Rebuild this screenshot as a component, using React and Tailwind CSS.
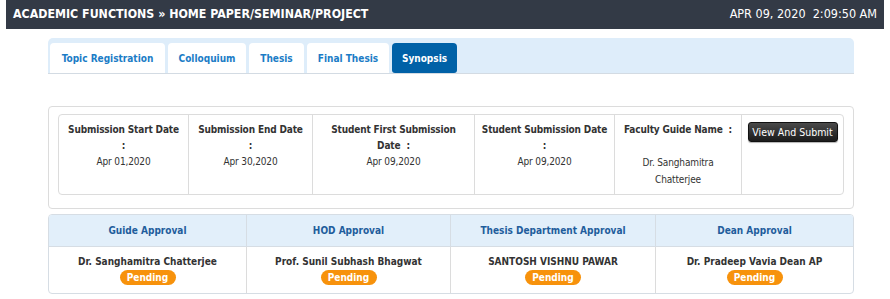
import React from 'react';

const tabs = [
    { label: 'Topic Registration', w: 'w-[115px]' },
    { label: 'Colloquium', w: 'w-[78px]' },
    { label: 'Thesis', w: 'w-[55px]' },
    { label: 'Final Thesis', w: 'w-[82px]' },
    { label: 'Synopsis', w: 'w-[65px]' },
];

const approvals = [
    { title: 'Guide Approval', name: 'Dr. Sanghamitra Chatterjee' },
    { title: 'HOD Approval', name: 'Prof. Sunil Subhash Bhagwat' },
    { title: 'Thesis Department Approval', name: 'SANTOSH VISHNU PAWAR' },
    { title: 'Dean Approval', name: 'Dr. Pradeep Vavia Dean AP' },
];

function PendingBadge() {
    return (
        <span className="inline-block w-[56px] h-[15px] leading-[15px] rounded-full bg-[#f7920c] text-white text-[10px] font-bold text-center">
            Pending
        </span>
    );
}

export default function App() {
    return (
        <div className="w-[890px] h-[299px] bg-white overflow-hidden font-['DejaVu_Sans_Condensed','DejaVu_Sans',sans-serif] text-[#333]">
            {/* top bar */}
            <div className="mx-[6px] h-[29px] bg-[#333a46] flex items-center justify-between pl-[7px] pr-[7px] text-white">
                <span className="text-[12.3px] font-bold">ACADEMIC FUNCTIONS » HOME PAPER/SEMINAR/PROJECT</span>
                <span className="text-[12.5px]">APR 09, 2020&nbsp;&nbsp;2:09:50 AM</span>
            </div>

            <div className="ml-[48px] w-[806px]">
                {/* tabs */}
                <div className="mt-[9px] h-[36px] bg-[#deedfa] rounded-t-[5px] border-b border-[#d3dbe3] flex items-end gap-[3px] pl-[2px]">
                    {tabs.map((t) => (
                        <div
                            key={t.label}
                            className={
                                t.label === 'Synopsis'
                                    ? `${t.w} h-[30px] flex items-center justify-center rounded-t-[4px] rounded-b-[3px] bg-[#0061a7] text-white text-[10px] font-bold`
                                    : `${t.w} h-[30px] flex items-center justify-center rounded-t-[4px] bg-white text-[#1b7cc6] text-[10px] font-bold`
                            }
                        >
                            {t.label}
                        </div>
                    ))}
                </div>

                {/* dates box */}
                <div className="mt-[32px] h-[103px] border border-[#dcdcdc] rounded-[4px] pt-[7px] px-[9px]">
                    <div className="h-[81px] border border-[#dcdcdc] rounded-[4px] flex text-[10px] tracking-[-0.15px] leading-[16px] text-center">
                        <div className="w-[130px] pt-[7px] border-r border-[#dcdcdc]">
                            <div className="font-bold">Submission Start Date</div>
                            <div className="font-bold">:</div>
                            <div>Apr 01,2020</div>
                        </div>
                        <div className="w-[124px] pt-[7px] border-r border-[#dcdcdc]">
                            <div className="font-bold">Submission End Date</div>
                            <div className="font-bold">:</div>
                            <div>Apr 30,2020</div>
                        </div>
                        <div className="w-[162px] pt-[7px] border-r border-[#dcdcdc]">
                            <div className="font-bold">Student First Submission</div>
                            <div className="font-bold">Date&nbsp;&nbsp;:</div>
                            <div>Apr 09,2020</div>
                        </div>
                        <div className="w-[140px] pt-[7px] border-r border-[#dcdcdc]">
                            <div className="font-bold">Student Submission Date</div>
                            <div className="font-bold">:</div>
                            <div>Apr 09,2020</div>
                        </div>
                        <div className="w-[127px] pt-[7px] border-r border-[#dcdcdc] leading-[17px]">
                            <div className="font-bold leading-[16px]">Faculty Guide Name&nbsp;&nbsp;:</div>
                            <div className="mt-[16px]">Dr. Sanghamitra</div>
                            <div>Chatterjee</div>
                        </div>
                        <div className="flex-1 pt-[7px] flex justify-center">
                            <button className="h-[20px] w-[90px] rounded-[3px] bg-gradient-to-b from-[#4a4a4a] to-[#1c1c1c] border border-[#111] text-white text-[10.5px] tracking-normal leading-[18px] shadow-[0_1px_1px_rgba(0,0,0,0.3)]">
                                View And Submit
                            </button>
                        </div>
                    </div>
                </div>

                {/* approvals */}
                <div className="mt-[5px] border border-[#d6dde4] rounded-[4px] overflow-hidden">
                    <div className="grid grid-cols-[198px_204px_205px_1fr] h-[32px] bg-[#e2effa] border-b border-[#d6dde4]">
                        {approvals.map((a, i) => (
                            <div
                                key={a.title}
                                className={`flex items-center justify-center pb-[1px] text-[10px] font-bold text-[#1f5d9c] ${i < 3 ? 'border-r border-[#d6dde4]' : ''}`}
                            >
                                {a.title}
                            </div>
                        ))}
                    </div>
                    <div className="grid grid-cols-[198px_204px_205px_1fr] h-[46px]">
                        {approvals.map((a, i) => (
                            <div
                                key={a.name}
                                className={`flex flex-col items-center pt-[7px] ${i < 3 ? 'border-r border-[#dcdcdc]' : ''}`}
                            >
                                <div className="text-[10px] font-bold leading-[16px] text-[#333]">{a.name}</div>
                                <PendingBadge />
                            </div>
                        ))}
                    </div>
                </div>
            </div>
        </div>
    );
}
